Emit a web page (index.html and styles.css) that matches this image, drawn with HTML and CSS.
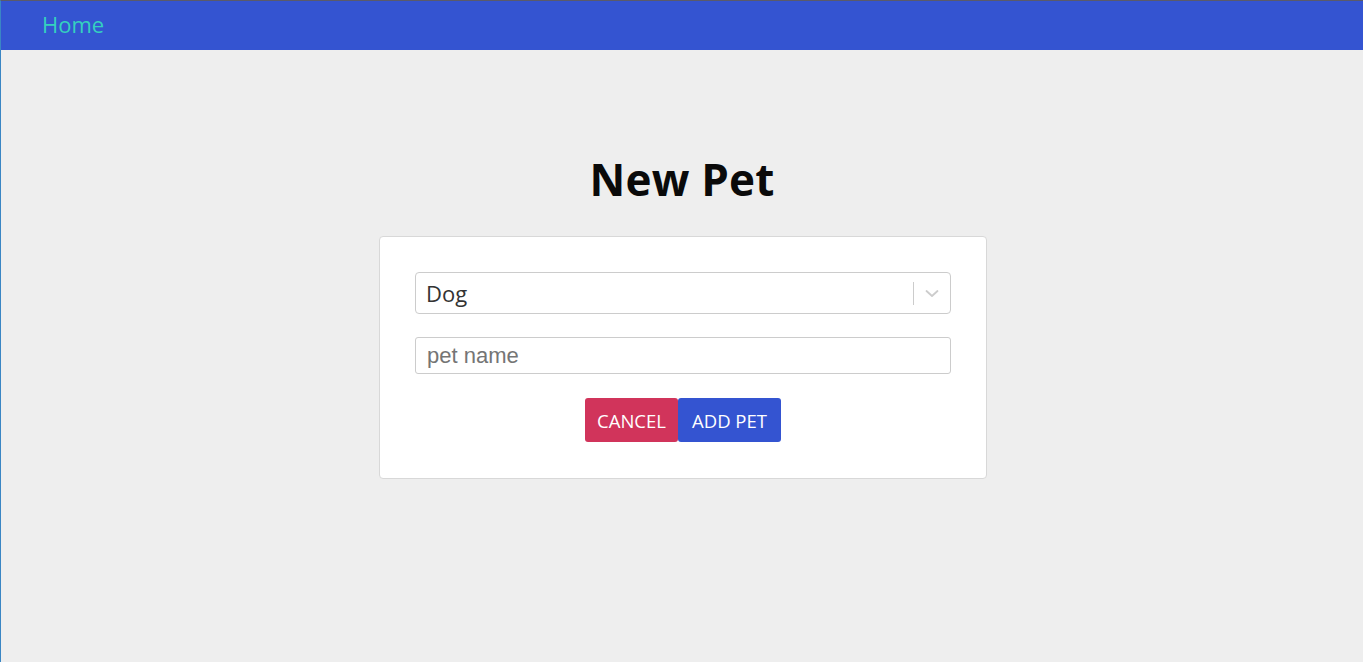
FILE: index.html
```html
<!DOCTYPE html>
<html>
<head>
<meta charset="utf-8">
<title>New Pet</title>
<link rel="stylesheet" href="styles.css">
</head>
<body>
<div class="page">
  <nav class="navbar">
    <a class="nav-link" href="#">Home</a>
  </nav>
  <main class="content">
    <h1 class="title">New Pet</h1>
    <form class="card">
      <div class="select">
        <span class="select-value">Dog</span>
        <span class="select-indicators">
          <span class="select-sep"></span>
          <svg class="chevron" width="20" height="20" viewBox="0 0 20 20"><path d="M4.5 8 L10 13 L15.5 8" fill="none" stroke="#cccccc" stroke-width="1.8" stroke-linecap="round" stroke-linejoin="round"/></svg>
        </span>
      </div>
      <input class="text-input" type="text" placeholder="pet name">
      <div class="actions">
        <button type="button" class="btn btn-cancel">CANCEL</button>
        <button type="button" class="btn btn-add">ADD PET</button>
      </div>
    </form>
  </main>
</div>
</body>
</html>
```

FILE: styles.css
```css
html, body {
  margin: 0;
  padding: 0;
  height: 100%;
}
body {
  background: #eeeeee;
  font-family: "Open Sans", "Noto Sans", sans-serif;
}
.page {
  min-height: 100%;
  box-sizing: border-box;
  border-left: 1px solid #3a86c4;
  border-top: 1px solid #5a5a6a;
}
.navbar {
  height: 49px;
  background: #3454d1;
  display: flex;
  align-items: center;
  padding-left: 41px;
}
.nav-link {
  color: #34d1bf;
  text-decoration: none;
  font-size: 22px;
  margin-top: -4px;
}
.content {
  display: flex;
  flex-direction: column;
  align-items: center;
}
.title {
  margin: 99px 0 0;
  font-size: 44px;
  font-weight: 700;
  line-height: 60px;
  color: #0a0a0a;
  letter-spacing: 0.2px;
}
.card {
  margin-top: 27px;
  margin-left: 2px;
  width: 608px;
  box-sizing: border-box;
  background: #ffffff;
  border: 1px solid #d8d8d8;
  border-radius: 4px;
  padding: 35px 35px 36px;
  display: flex;
  flex-direction: column;
}
.select {
  height: 42px;
  box-sizing: border-box;
  border: 1px solid #cccccc;
  border-radius: 4px;
  display: flex;
  align-items: center;
  justify-content: space-between;
  padding-left: 10px;
}
.select-value {
  font-size: 22px;
  color: #333333;
}
.select-indicators {
  display: flex;
  align-items: center;
  align-self: stretch;
}
.select-sep {
  width: 1px;
  background: #cccccc;
  height: 23px;
  margin-right: 8px;
}
.chevron {
  display: block;
  margin-right: 8px;
}
.text-input {
  margin-top: 23px;
  height: 37px;
  box-sizing: border-box;
  border: 1px solid #cccccc;
  border-radius: 3px;
  padding: 0 11px;
  font-family: "Liberation Sans", Arial, sans-serif;
  font-size: 22px;
  color: #333333;
  outline: none;
}
.text-input::placeholder {
  color: #757575;
}
.actions {
  margin-top: 24px;
  display: flex;
  justify-content: center;
}
.btn {
  height: 44px;
  border: none;
  border-radius: 3px;
  color: #ffffff;
  font-family: "Open Sans", "Noto Sans", sans-serif;
  font-size: 18.5px;
  padding: 0;
  cursor: pointer;
}
.btn-cancel {
  background: #d1345b;
  width: 93px;
}
.btn-add {
  background: #3454d1;
  width: 103px;
}
```
